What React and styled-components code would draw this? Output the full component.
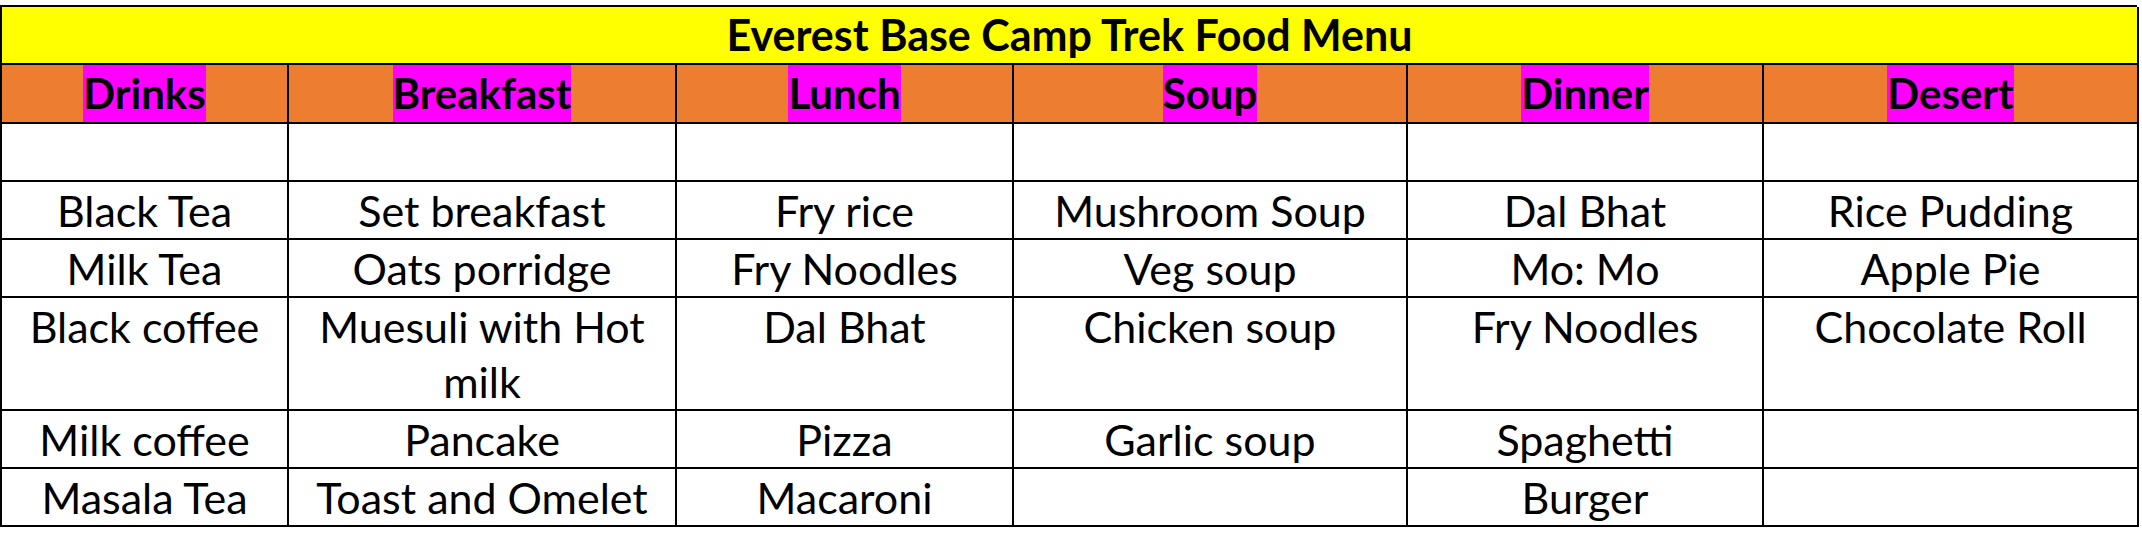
import React from "react";
import styled, { createGlobalStyle } from "styled-components";

const GlobalStyle = createGlobalStyle`
  html, body {
    margin: 0;
    padding: 0;
    background: #ffffff;
  }
  body {
    font-family: Lato, "Liberation Sans", sans-serif;
  }
`;

const Page = styled.div`
  padding-top: 5px;
`;

const Grid = styled.div`
  display: grid;
  grid-template-columns: 287px 388px 337px 394px 356px 375px;
  width: 2137px;
  border-top: 2px solid #000;
  border-left: 2px solid #000;
  box-sizing: border-box;
`;

const Cell = styled.div`
  box-sizing: border-box;
  border-right: 2px solid #000;
  border-bottom: 2px solid #000;
  height: ${({ tall }) => (tall ? "113px" : "58px")};
  padding-top: 1px;
  text-align: center;
  font-size: 43px;
  line-height: 55px;
  color: #000;
  overflow: hidden;
`;

const TitleCell = styled.div`
  grid-column: 1 / -1;
  box-sizing: border-box;
  height: 58px;
  border-right: 2px solid #000;
  border-bottom: 2px solid #000;
  background: #ffff00;
  text-align: center;
  font-weight: 700;
  font-size: 43px;
  line-height: 56px;
`;

const HeadCell = styled.div`
  box-sizing: border-box;
  height: 59px;
  border-right: 2px solid #000;
  border-bottom: 2px solid #000;
  background: #ed7d31;
  text-align: center;
  font-weight: 700;
  font-size: 42px;
  line-height: 57px;
`;

const Highlight = styled.span`
  display: inline-block;
  height: 57px;
  background: #ff00ff;
`;

const columns = [
  { name: "Drinks", items: ["Black Tea", "Milk Tea", "Black coffee", "Milk coffee", "Masala Tea"] },
  { name: "Breakfast", items: ["Set breakfast", "Oats porridge", "Muesuli with Hot milk", "Pancake", "Toast and Omelet"] },
  { name: "Lunch", items: ["Fry rice", "Fry Noodles", "Dal Bhat", "Pizza", "Macaroni"] },
  { name: "Soup", items: ["Mushroom Soup", "Veg soup", "Chicken soup", "Garlic soup", ""] },
  { name: "Dinner", items: ["Dal Bhat", "Mo: Mo", "Fry Noodles", "Spaghetti", "Burger"] },
  { name: "Desert", items: ["Rice Pudding", "Apple Pie", "Chocolate Roll", "", ""] },
];

const rowCount = 5;

export default function App() {
  return (
    <Page>
      <GlobalStyle />
      <Grid>
        <TitleCell>Everest Base Camp Trek Food Menu</TitleCell>
        {columns.map((c) => (
          <HeadCell key={c.name}>
            <Highlight>{c.name}</Highlight>
          </HeadCell>
        ))}
        {columns.map((c) => (
          <Cell key={"blank-" + c.name} />
        ))}
        {Array.from({ length: rowCount }).map((_, r) =>
          columns.map((c) => (
            <Cell key={c.name + r} tall={r === 2}>
              {c.items[r]}
            </Cell>
          ))
        )}
      </Grid>
    </Page>
  );
}
